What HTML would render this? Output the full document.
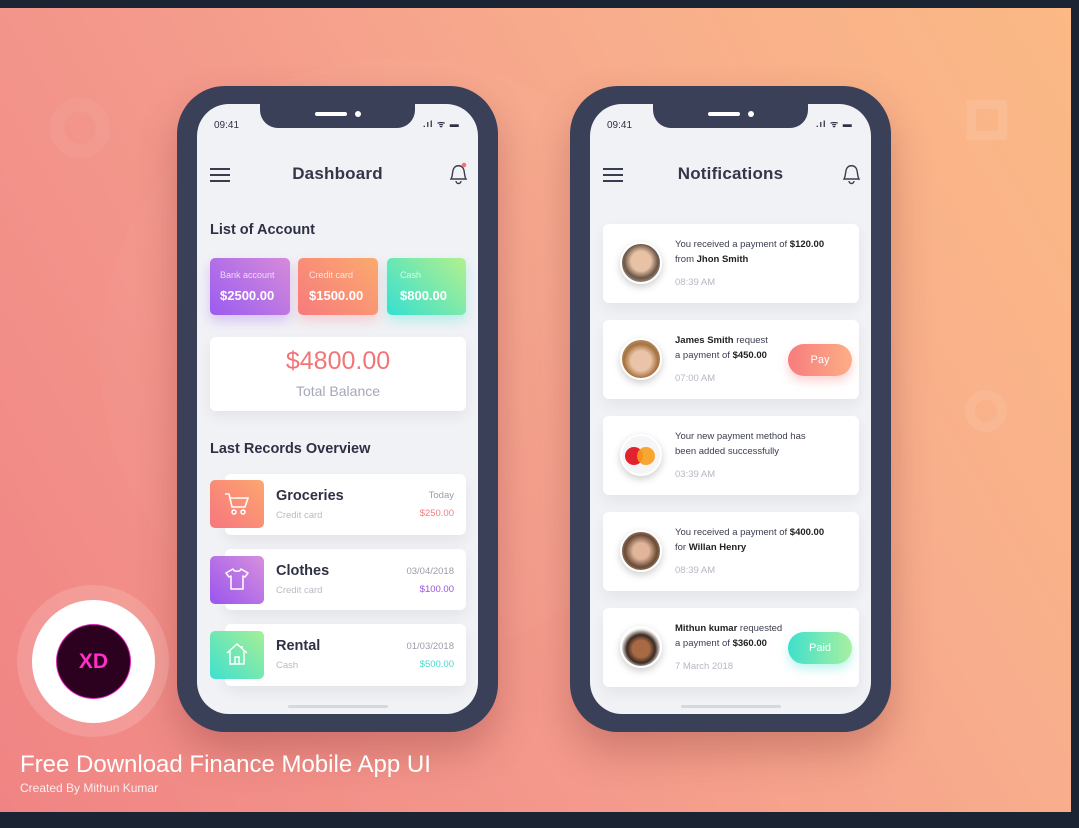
<!DOCTYPE html>
<html><head><meta charset="utf-8"><style>
*{margin:0;padding:0;box-sizing:border-box}
body{width:1079px;height:828px;background:#1b2432;position:relative;overflow:hidden;font-family:"Liberation Sans",sans-serif}
.bg{position:absolute;left:0;top:8px;width:1071px;height:804px;background:linear-gradient(60deg,#f08484 0%,#f49a8c 40%,#f8ae8c 70%,#fbb985 100%);overflow:hidden}
.a{position:absolute}
.phone{position:absolute;top:86px;width:321px;height:646px;background:#3b4059;border-radius:48px;box-shadow:0 20px 40px rgba(120,40,40,.3)}
.scr{position:absolute;left:20px;top:18px;width:281px;height:610px;background:#f1f2f6;border-radius:32px;overflow:hidden}
.notch{position:absolute;left:63px;top:0;width:155px;height:24px;background:#3b4059;border-radius:0 0 18px 18px}
.t{position:absolute;white-space:nowrap;color:#2e3144}
.card{position:absolute;background:#fff;border-radius:6px;box-shadow:0 6px 14px rgba(0,0,0,.06)}
.ic{position:absolute;width:54px;height:48px;border-radius:5px}
.av{position:absolute;width:42px;height:42px;border-radius:50%;border:2px solid #fff;box-shadow:0 3px 8px rgba(0,0,0,.2)}
.nt{position:absolute;font-size:9.5px;color:#3a3d50;line-height:15px;white-space:nowrap}
.nt b{color:#222}
.tm{position:absolute;font-size:9.5px;color:#b5b8c4}
.hd{font-size:17px;font-weight:bold;color:#34374a;letter-spacing:.2px}
</style></head><body>
<div class="bg">
 <div class="a" style="left:100px;top:50px;width:600px;height:600px;border-radius:50%;background:rgba(255,255,255,.025)"></div>
 <div class="a" style="left:967px;top:92px;width:40px;height:40px;border:9px solid rgba(255,255,255,.1)"></div>
 <div class="a" style="left:965px;top:382px;width:42px;height:42px;border-radius:50%;border:10px solid rgba(255,255,255,.08)"></div>
 <div class="a" style="left:50px;top:90px;width:60px;height:60px;border-radius:50%;border:14px solid rgba(255,255,255,.05)"></div>
</div>

<!-- phone 1 -->
<div class="phone" style="left:177px">
 <div class="scr">
  <div class="notch"><div class="a" style="left:55px;top:8px;width:32px;height:4px;background:#fff;border-radius:2px"></div><div class="a" style="left:95px;top:7px;width:6px;height:6px;background:#fff;border-radius:50%"></div></div>
  <div class="t" style="left:17px;top:16px;font-size:10px">09:41</div>
  <div class="t" style="left:226px;top:13px;font-size:9px;letter-spacing:1px;font-weight:bold">.ıl ᯤ ▬</div>
  <div class="a" style="left:13px;top:64px;width:20px;height:2px;background:#3a3d50;box-shadow:0 6px 0 #3a3d50,0 12px 0 #3a3d50"></div>
  <div class="t hd" style="left:0;width:281px;text-align:center;top:60px">Dashboard</div>
  <svg class="a" style="left:250px;top:58px" width="22" height="24" viewBox="0 0 22 24"><path d="M4 17 C6 14 5 9 7 6 C9 3 14 3 16 6 C18 9 17 14 19 17 Z M9 19 a2.5 2.5 0 0 0 5 0" fill="none" stroke="#3a3d50" stroke-width="1.4"/><circle cx="17" cy="3" r="2.3" fill="#f47272"/></svg>
  <div class="t" style="left:13px;top:118px;font-size:14.5px;font-weight:bold">List of Account</div>
  <div class="a" style="left:13px;top:154px;width:80px;height:57px;border-radius:5px;background:linear-gradient(45deg,#9b5cf0,#d58bd9);box-shadow:0 6px 12px rgba(160,90,240,.3)"></div>
  <div class="a" style="left:101px;top:154px;width:80px;height:57px;border-radius:5px;background:linear-gradient(45deg,#f77a7d,#fbaa6f);box-shadow:0 6px 12px rgba(247,122,125,.3)"></div>
  <div class="a" style="left:190px;top:154px;width:79px;height:57px;border-radius:5px;background:linear-gradient(45deg,#35e0d0,#b4f08e);box-shadow:0 6px 12px rgba(53,224,208,.3)"></div>
  <div class="t" style="left:23px;top:166px;font-size:9px;color:rgba(255,255,255,.75)">Bank account</div>
  <div class="t" style="left:23px;top:184px;font-size:13px;color:#fff;font-weight:bold">$2500.00</div>
  <div class="t" style="left:112px;top:166px;font-size:9px;color:rgba(255,255,255,.75)">Credit card</div>
  <div class="t" style="left:112px;top:184px;font-size:13px;color:#fff;font-weight:bold">$1500.00</div>
  <div class="t" style="left:203px;top:166px;font-size:9px;color:rgba(255,255,255,.75)">Cash</div>
  <div class="t" style="left:203px;top:184px;font-size:13px;color:#fff;font-weight:bold">$800.00</div>
  <div class="card" style="left:13px;top:233px;width:256px;height:74px"></div>
  <div class="t" style="left:13px;width:256px;text-align:center;top:243px;font-size:25px;color:#f17577">$4800.00</div>
  <div class="t" style="left:13px;width:256px;text-align:center;top:279px;font-size:14px;color:#a5a8b6">Total Balance</div>
  <div class="t" style="left:13px;top:337px;font-size:14.5px;font-weight:bold">Last Records Overview</div>

  <div class="card" style="left:28px;top:370px;width:241px;height:61px"></div>
  <div class="ic" style="left:13px;top:376px;background:linear-gradient(45deg,#f7767f,#fca66e)"></div>
  <svg class="a" style="left:26px;top:387px" width="28" height="26" viewBox="0 0 28 26"><path d="M2 3h4l3 13h13l3-9H8" fill="none" stroke="#fff" stroke-width="1.6"/><circle cx="11" cy="21" r="2" fill="none" stroke="#fff" stroke-width="1.5"/><circle cx="20" cy="21" r="2" fill="none" stroke="#fff" stroke-width="1.5"/></svg>
  <div class="t" style="left:79px;top:384px;font-size:14.5px;font-weight:bold">Groceries</div>
  <div class="t" style="left:79px;top:406px;font-size:9.5px;color:#b8bbc6">Credit card</div>
  <div class="t" style="left:200px;width:57px;text-align:right;top:386px;font-size:9.5px;color:#9a9dab">Today</div>
  <div class="t" style="left:200px;width:57px;text-align:right;top:404px;font-size:9.5px;color:#f08080">$250.00</div>

  <div class="card" style="left:28px;top:445px;width:241px;height:61px"></div>
  <div class="ic" style="left:13px;top:452px;background:linear-gradient(45deg,#9a55ef,#d690dc)"></div>
  <svg class="a" style="left:27px;top:462px" width="26" height="26" viewBox="0 0 26 26"><path d="M9 3 C10 6 16 6 17 3 L24 7 L21 11 L19 10 V23 H7 V10 L5 11 L2 7 Z" fill="none" stroke="#fff" stroke-width="1.5" stroke-linejoin="round"/></svg>
  <div class="t" style="left:79px;top:459px;font-size:14.5px;font-weight:bold">Clothes</div>
  <div class="t" style="left:79px;top:481px;font-size:9.5px;color:#b8bbc6">Credit card</div>
  <div class="t" style="left:200px;width:57px;text-align:right;top:462px;font-size:9.5px;color:#9a9dab">03/04/2018</div>
  <div class="t" style="left:200px;width:57px;text-align:right;top:480px;font-size:9.5px;color:#9a55dd">$100.00</div>

  <div class="card" style="left:28px;top:520px;width:241px;height:62px"></div>
  <div class="ic" style="left:13px;top:527px;background:linear-gradient(45deg,#3ee0d0,#a8ef95)"></div>
  <svg class="a" style="left:27px;top:537px" width="26" height="26" viewBox="0 0 26 26"><path d="M3 12 L13 3 L23 12 M6 10 V23 H20 V10 M11 23 V16 H15 V23 M18 5 V8" fill="none" stroke="#fff" stroke-width="1.5"/></svg>
  <div class="t" style="left:79px;top:534px;font-size:14.5px;font-weight:bold">Rental</div>
  <div class="t" style="left:79px;top:556px;font-size:9.5px;color:#b8bbc6">Cash</div>
  <div class="t" style="left:200px;width:57px;text-align:right;top:537px;font-size:9.5px;color:#9a9dab">01/03/2018</div>
  <div class="t" style="left:200px;width:57px;text-align:right;top:555px;font-size:9.5px;color:#45dccc">$500.00</div>
  <div class="a" style="left:91px;top:601px;width:100px;height:3px;background:#d6d8e0;border-radius:2px"></div>
 </div>
</div>

<!-- phone 2 -->
<div class="phone" style="left:570px">
 <div class="scr">
  <div class="notch"><div class="a" style="left:55px;top:8px;width:32px;height:4px;background:#fff;border-radius:2px"></div><div class="a" style="left:95px;top:7px;width:6px;height:6px;background:#fff;border-radius:50%"></div></div>
  <div class="t" style="left:17px;top:16px;font-size:10px">09:41</div>
  <div class="t" style="left:226px;top:13px;font-size:9px;letter-spacing:1px;font-weight:bold">.ıl ᯤ ▬</div>
  <div class="a" style="left:13px;top:64px;width:20px;height:2px;background:#3a3d50;box-shadow:0 6px 0 #3a3d50,0 12px 0 #3a3d50"></div>
  <div class="t hd" style="left:0;width:281px;text-align:center;top:60px">Notifications</div>
  <svg class="a" style="left:250px;top:58px" width="22" height="24" viewBox="0 0 22 24"><path d="M4 17 C6 14 5 9 7 6 C9 3 14 3 16 6 C18 9 17 14 19 17 Z M9 19 a2.5 2.5 0 0 0 5 0" fill="none" stroke="#3a3d50" stroke-width="1.4"/></svg>

  <div class="card" style="left:13px;top:120px;width:256px;height:79px"></div>
  <div class="av" style="left:30px;top:138px;background:radial-gradient(circle at 50% 45%,#e8c2a5 35%,#6b5647 60%,#d6d2cc)"></div>
  <div class="nt" style="left:85px;top:133px">You received a payment of <b>$120.00</b><br>from <b>Jhon Smith</b></div>
  <div class="tm" style="left:85px;top:173px">08:39 AM</div>

  <div class="card" style="left:13px;top:216px;width:256px;height:79px"></div>
  <div class="av" style="left:30px;top:234px;background:radial-gradient(circle at 50% 55%,#eac3a8 35%,#a7733f 60%,#c8b8a5)"></div>
  <div class="nt" style="left:85px;top:229px"><b>James Smith</b> request<br>a payment of <b>$450.00</b></div>
  <div class="tm" style="left:85px;top:269px">07:00 AM</div>
  <div class="a" style="left:198px;top:240px;width:64px;height:32px;border-radius:16px;background:linear-gradient(90deg,#f77c7e,#fcae86);box-shadow:0 5px 10px rgba(247,124,126,.35);color:#fff;font-size:11px;text-align:center;line-height:32px">Pay</div>

  <div class="card" style="left:13px;top:312px;width:256px;height:79px"></div>
  <div class="av" style="left:30px;top:330px;background:#f5f5f7"></div>
  <div class="a" style="left:35px;top:343px;width:18px;height:18px;border-radius:50%;background:#e2222e"></div>
  <div class="a" style="left:47px;top:343px;width:18px;height:18px;border-radius:50%;background:#f79e1b;opacity:.9"></div>
  <div class="nt" style="left:85px;top:325px">Your new payment method has<br>been added successfully</div>
  <div class="tm" style="left:85px;top:365px">03:39 AM</div>

  <div class="card" style="left:13px;top:408px;width:256px;height:79px"></div>
  <div class="av" style="left:30px;top:426px;background:radial-gradient(circle at 50% 50%,#e0b59a 30%,#6a4a35 60%,#d8c8b8)"></div>
  <div class="nt" style="left:85px;top:421px">You received a payment of <b>$400.00</b><br>for <b>Willan Henry</b></div>
  <div class="tm" style="left:85px;top:461px">08:39 AM</div>

  <div class="card" style="left:13px;top:504px;width:256px;height:79px"></div>
  <div class="av" style="left:30px;top:522px;background:radial-gradient(circle at 50% 55%,#a86a45 30%,#3a2a22 50%,#f5f2f0 70%)"></div>
  <div class="nt" style="left:85px;top:517px"><b>Mithun kumar</b> requested<br>a payment of <b>$360.00</b></div>
  <div class="tm" style="left:85px;top:557px">7 March 2018</div>
  <div class="a" style="left:198px;top:528px;width:64px;height:32px;border-radius:16px;background:linear-gradient(90deg,#3fe0cc,#a8f0a0);box-shadow:0 5px 10px rgba(63,224,204,.35);color:#fff;font-size:11px;text-align:center;line-height:32px">Paid</div>
  <div class="a" style="left:91px;top:601px;width:100px;height:3px;background:#d6d8e0;border-radius:2px"></div>
 </div>
</div>

<div class="a" style="left:17px;top:585px;width:152px;height:152px;border-radius:50%;background:rgba(255,255,255,.15)"></div>
<div class="a" style="left:32px;top:600px;width:123px;height:123px;border-radius:50%;background:#fff"></div>
<div class="a" style="left:57px;top:625px;width:73px;height:73px;border-radius:50%;background:#2c0120;box-shadow:0 0 0 1px #e01fb5;color:#ff2fc8;font-weight:bold;font-size:21px;text-align:center;line-height:73px">XD</div>
<div class="t" style="left:20px;top:751px;font-size:24px;color:#fff">Free Download Finance Mobile App UI</div>
<div class="t" style="left:20px;top:781px;font-size:12px;color:rgba(255,255,255,.85)">Created By Mithun Kumar</div>
</body></html>
